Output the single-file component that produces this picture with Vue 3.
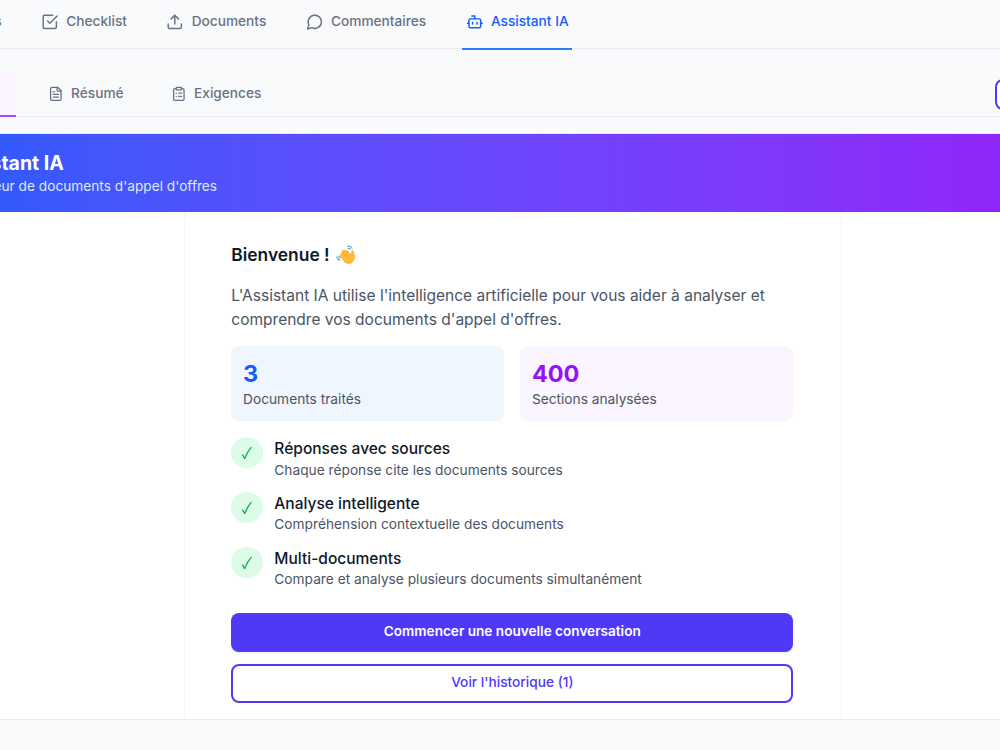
<script setup>
import { ref } from 'vue'

const mainTabs = [
  { key: 'steps', label: 'Étapes', icon: ['M4 6h16', 'M4 12h16', 'M4 18h16'] },
  {
    key: 'checklist',
    label: 'Checklist',
    icon: ['m9 11 3 3L22 4', 'M21 12v7a2 2 0 0 1-2 2H5a2 2 0 0 1-2-2V5a2 2 0 0 1 2-2h11']
  },
  {
    key: 'documents',
    label: 'Documents',
    icon: ['M21 15v4a2 2 0 0 1-2 2H5a2 2 0 0 1-2-2v-4', 'm17 8-5-5-5 5', 'M12 3v12']
  },
  { key: 'comments', label: 'Commentaires', icon: ['M7.9 20A9 9 0 1 0 4 16.1L2 22Z'] },
  {
    key: 'assistant',
    label: 'Assistant IA',
    icon: [
      'M12 8V4H8',
      'M6 8h12a2 2 0 0 1 2 2v8a2 2 0 0 1-2 2H6a2 2 0 0 1-2-2v-8a2 2 0 0 1 2-2z',
      'M2 14h2',
      'M20 14h2',
      'M15 13v2',
      'M9 13v2'
    ]
  }
]

const subTabs = [
  { key: 'chat', label: 'Chat', icon: ['M7.9 20A9 9 0 1 0 4 16.1L2 22Z'] },
  {
    key: 'summary',
    label: 'Résumé',
    icon: [
      'M15 2H6a2 2 0 0 0-2 2v16a2 2 0 0 0 2 2h12a2 2 0 0 0 2-2V7Z',
      'M14 2v4a2 2 0 0 0 2 2h4',
      'M10 9H8',
      'M16 13H8',
      'M16 17H8'
    ]
  },
  {
    key: 'requirements',
    label: 'Exigences',
    icon: [
      'M9 2h6a1 1 0 0 1 1 1v2a1 1 0 0 1-1 1H9a1 1 0 0 1-1-1V3a1 1 0 0 1 1-1z',
      'M16 4h2a2 2 0 0 1 2 2v14a2 2 0 0 1-2 2H6a2 2 0 0 1-2-2V6a2 2 0 0 1 2-2h2',
      'M12 11h4',
      'M12 16h4',
      'M8 11h.01',
      'M8 16h.01'
    ]
  }
]

const stats = [
  { value: 3, label: 'Documents traités', color: 'blue' },
  { value: 400, label: 'Sections analysées', color: 'purple' }
]

const features = [
  { title: 'Réponses avec sources', text: 'Chaque réponse cite les documents sources' },
  { title: 'Analyse intelligente', text: 'Compréhension contextuelle des documents' },
  { title: 'Multi-documents', text: 'Compare et analyse plusieurs documents simultanément' }
]

const activeTab = ref('assistant')
const activeSubTab = ref('chat')
const historyCount = ref(1)
</script>

<template>
  <div class="page">
    <nav class="main-tabs">
      <button
        v-for="tab in mainTabs"
        :key="tab.key"
        class="main-tab"
        :class="{ active: activeTab === tab.key }"
        @click="activeTab = tab.key"
      >
        <svg class="icon" viewBox="0 0 24 24">
          <path v-for="d in tab.icon" :key="d" :d="d" />
        </svg>
        <span>{{ tab.label }}</span>
      </button>
    </nav>

    <div class="sub-bar">
      <nav class="sub-tabs">
        <button
          v-for="tab in subTabs"
          :key="tab.key"
          class="sub-tab"
          :class="{ active: activeSubTab === tab.key }"
          @click="activeSubTab = tab.key"
        >
          <svg class="icon" viewBox="0 0 24 24">
            <path v-for="d in tab.icon" :key="d" :d="d" />
          </svg>
          <span>{{ tab.label }}</span>
        </button>
      </nav>
      <button class="outline-btn small" aria-label="Historique"></button>
    </div>

    <section class="panel">
      <header class="banner">
        <h2>Assistant IA</h2>
        <p>Analyseur de documents d'appel d'offres</p>
      </header>

      <div class="welcome">
        <h3>
          <span>Bienvenue !</span>
          <svg class="wave" viewBox="0 0 20 20">
            <g fill="none" stroke="#5fa9e6" stroke-width="1.3" stroke-linecap="round">
              <path d="M12.2 1.4c1.8-.6 3.6.2 4.2 2.1" />
              <path d="M12.3 3.5c1-.2 1.7.1 2.1 1" />
              <path d="M1 12.2c.2 1.7 1.3 2.8 3 3.1" />
              <path d="M3 11.4c.1.9.6 1.4 1.4 1.6" />
            </g>
            <path
              fill="#fcbc3c"
              d="M5.3 9.3c-.7-.9.5-2.1 1.4-1.3L6 6.6c-.6-1.1.9-2 1.6-1.1l.5.7c-.5-1.1 1-1.9 1.7-.9l.7.9c-.2-1 1.2-1.5 1.8-.6l3 4.1c.3-1 .2-2.4.4-3.5.3-1.3 2.2-1.2 2.5.1.4 1.7 1.3 3.6 1.2 6.1-.1 3.9-2.8 6.9-6.4 6.9-2.6 0-4.4-1.3-5.8-3.3l-3.2-4.6c-.7-1 .5-2.8 1.3-2.1z"
            />
            <path
              fill="none"
              stroke="#ef9a2e"
              stroke-width=".6"
              stroke-linecap="round"
              d="m6.7 8 2.5 3.2M8.1 6.2l2.7 3.7M10.5 6.2l2.1 2.9M15.3 9.7c-1.8.9-2.4 2-2.1 3.6M9 17.3c2.2 1.8 5.6 2.2 8-.3"
            />
          </svg>
        </h3>
        <p class="intro">
          L'Assistant IA utilise l'intelligence artificielle pour vous aider à analyser et
          comprendre vos documents d'appel d'offres.
        </p>

        <div class="stats">
          <div v-for="stat in stats" :key="stat.label" class="stat" :class="stat.color">
            <div class="stat-value">{{ stat.value }}</div>
            <div class="stat-label">{{ stat.label }}</div>
          </div>
        </div>

        <ul class="features">
          <li v-for="feature in features" :key="feature.title">
            <span class="check">
              <svg viewBox="0 0 12 14">
                <path d="M.8 8.9 2 8.3c.7.9 1.2 1.9 1.6 3C5.2 7.1 7.3 3.8 10.2.8l1 .3C8.3 4.6 6.1 8.5 4.3 13.1H3C2.5 11.6 1.8 10.2.8 8.9z" />
              </svg>
            </span>
            <div>
              <div class="feature-title">{{ feature.title }}</div>
              <div class="feature-text">{{ feature.text }}</div>
            </div>
          </li>
        </ul>

        <div class="actions">
          <button class="primary-btn">Commencer une nouvelle conversation</button>
          <button class="outline-btn">Voir l'historique ({{ historyCount }})</button>
        </div>
      </div>
    </section>
  </div>
</template>

<style>
body {
  background: #f9fafc;
}
</style>

<style scoped>
.page {
  height: 750px;
  overflow: hidden;
  background: #f9fafc;
  color: #101828;
  font-family: Inter, 'Liberation Sans', sans-serif;
  font-size: 15.52px;
}

h2,
h3,
p,
ul {
  margin: 0;
  padding: 0;
}

button {
  box-sizing: border-box;
  border: 0;
  padding: 0;
  background: none;
  font-family: inherit;
  font-size: 13.7px;
  font-weight: 500;
  line-height: 19.6px;
  white-space: nowrap;
}

.icon {
  flex: none;
  fill: none;
  stroke: currentColor;
  stroke-width: 2;
  stroke-linecap: round;
  stroke-linejoin: round;
}

/* main navigation */
.main-tabs {
  display: flex;
  gap: 31.5px;
  box-sizing: border-box;
  height: 49px;
  margin-left: -75.3px;
  border-bottom: 1px solid #e9ebef;
}

.main-tab {
  display: flex;
  flex: none;
  align-items: center;
  gap: 7.8px;
  height: 50px;
  padding: 0 3.9px 5px;
  border-bottom: 2px solid transparent;
  color: #6a7282;
}

.main-tab:first-child {
  width: 80.7px;
  justify-content: flex-end;
}

.main-tab .icon {
  width: 17.6px;
  height: 17.6px;
}

.main-tab.active {
  border-bottom-color: #2b7fff;
  color: #155dfc;
}

/* secondary navigation */
.sub-bar {
  display: flex;
  justify-content: space-between;
  box-sizing: border-box;
  height: 68px;
  margin: 0 -123px;
  padding-top: 23px;
  border-bottom: 1px solid #eceef1;
}

.sub-tabs {
  display: flex;
  gap: 15.65px;
}

.sub-tab {
  display: flex;
  align-items: center;
  gap: 7.8px;
  height: 45px;
  padding: 1px 15.65px 0;
  border-bottom: 2px solid transparent;
  color: #6a7282;
}

.sub-tab:first-child {
  width: 139.4px;
}

.sub-tab .icon {
  width: 15.65px;
  height: 15.65px;
}

.sub-tab.active {
  border-bottom-color: #ad46ff;
  border-radius: 8px 8px 0 0;
  background: #faf5ff;
  color: #9810fa;
}

.outline-btn {
  height: 39px;
  padding-bottom: 1px;
  border: 2px solid #4f39f6;
  border-radius: 8px;
  background: #fff;
  color: #4f39f6;
}

.outline-btn.small {
  width: 127.6px;
  height: 31px;
  margin-top: 7px;
}

.panel {
  margin: 16px -148px 0 -123px;
  border: 1px solid #e9ebef;
  background: #fff;
}

.banner {
  box-sizing: border-box;
  height: 78px;
  padding: 16px 71px;
  background: linear-gradient(to right in oklab, #155dfc, #9810fa);
  color: #fff;
}

.banner h2 {
  font-size: 19.5px;
  font-weight: 700;
  line-height: 27.4px;
}

.banner p {
  padding-left: 1px;
  color: #dbeafe;
  font-size: 13.7px;
  line-height: 19px;
}

.welcome {
  box-sizing: border-box;
  width: 658px;
  height: 507px;
  margin: 0 auto;
  padding: 29px 47.2px 0 46.8px;
  border: 1px solid #f3f4f6;
  border-width: 0 1px;
}

.welcome h3 {
  display: flex;
  align-items: center;
  gap: 6.5px;
  margin-bottom: 15.65px;
  font-size: 17.4px;
  font-weight: 600;
  line-height: 27.4px;
}

.wave {
  width: 19.5px;
  height: 19.5px;
}

.intro {
  margin-bottom: 15px;
  color: #4a5565;
  line-height: 23.48px;
}

.stats {
  display: grid;
  grid-template-columns: 1fr 1fr;
  gap: 15.65px;
}

.stat {
  padding: 11.75px;
  border-radius: 8px;
}

.stat.blue {
  background: #eff6ff;
}

.stat.purple {
  background: #faf5ff;
}

.stat-value {
  color: #155dfc;
  font-size: 23.5px;
  font-weight: 700;
  line-height: 31.9px;
}

.purple .stat-value {
  color: #9810fa;
}

.stat-label,
.feature-text {
  color: #4a5565;
  font-size: 13.72px;
  line-height: 19.6px;
}

.features {
  display: grid;
  gap: 11.9px;
  margin: 16px 0 22.8px;
  list-style: none;
}

.features li {
  display: flex;
  gap: 11.75px;
}

.check {
  display: flex;
  flex: none;
  align-items: center;
  justify-content: center;
  width: 31.3px;
  height: 31.3px;
  border-radius: 50%;
  background: #dcfce7;
}

.check svg {
  width: 12px;
  height: 14px;
  fill: #17ad4e;
}

.feature-title {
  font-weight: 500;
  line-height: 23.48px;
}

.actions {
  display: grid;
  gap: 12px;
}

.primary-btn {
  height: 39px;
  padding-bottom: 1px;
  border-radius: 8px;
  background: #4f39f6;
  box-shadow: 0 1px 2px rgba(0, 0, 0, 0.08);
  color: #fff;
  font-size: 13.6px;
  font-weight: 600;
}
</style>
